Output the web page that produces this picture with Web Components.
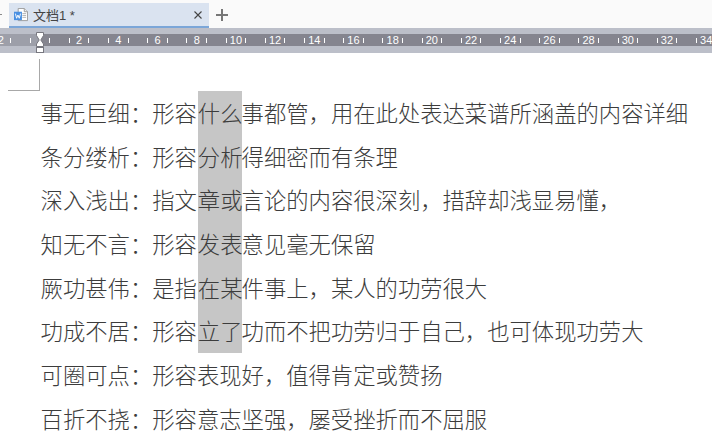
<!DOCTYPE html>
<html lang="zh-CN"><head><meta charset="utf-8"><title>文档1</title>
<style>
html,body{margin:0;padding:0;background:#fff}
body{width:712px;height:442px;overflow:hidden;font-family:"Liberation Sans","Noto Sans CJK SC",sans-serif}
</style></head><body>
<doc-app>
  <doc-tabs title-text="文档1 *"></doc-tabs>
  <doc-ruler></doc-ruler>
  <doc-page>
    <doc-line>事无巨细：形容<mark-block>什么</mark-block>事都管，用在此处表达菜谱所涵盖的内容详细</doc-line>
    <doc-line>条分缕析：形容<mark-block>分析</mark-block>得细密而有条理</doc-line>
    <doc-line>深入浅出：指文<mark-block>章或</mark-block>言论的内容很深刻，措辞却浅显易懂，</doc-line>
    <doc-line>知无不言：形容<mark-block>发表</mark-block>意见毫无保留</doc-line>
    <doc-line>厥功甚伟：是指<mark-block>在某</mark-block>件事上，某人的功劳很大</doc-line>
    <doc-line>功成不居：形容<mark-block>立了</mark-block>功而不把功劳归于自己，也可体现功劳大</doc-line>
    <doc-line>可圈可点：形容表现好，值得肯定或赞扬</doc-line>
    <doc-line>百折不挠：形容意志坚强，屡受挫折而不屈服</doc-line>
  </doc-page>
</doc-app>
<script>
function def(name, css, html, init){
  customElements.define(name, class extends HTMLElement{
    connectedCallback(){
      if(this.shadowRoot) return;
      const r=this.attachShadow({mode:'open'});
      r.innerHTML='<style>'+css+'</style>'+(typeof html==='function'?html(this):html);
      if(init) init(r,this);
    }
  });
}
def('doc-app',':host{display:flex;flex-direction:column;width:712px;height:442px;overflow:hidden}','<slot></slot>');
def('doc-tabs',`
:host{display:flex;position:relative;align-items:flex-start;height:28px;background:#fafafa;padding:3px 0 0 9px;box-sizing:border-box}
:host::before{content:"";position:absolute;left:0;top:14px;width:2px;height:1px;background:#8a8a8a}
.tab{width:200px;height:25px;box-sizing:border-box;background:#dae3f0;border-bottom:2px solid #7ba6d8;display:flex;align-items:center;padding:0 6px 0 5px;color:#444;font:13px "Liberation Sans","Noto Sans CJK SC",sans-serif}
.ic{width:14px;height:14px;margin-right:5px;flex:none}
.t{flex:1;white-space:pre}
.x{width:10px;height:10px;flex:none}
.plus{width:14px;height:14px;margin:5px 0 0 6px;flex:none}
`,h=>`<div class="tab">
<svg class="ic" viewBox="0 0 15 15"><path d="M4.5 .5H11L14.5 4V13.5H4.5Z" fill="#fff" stroke="#9a9a9a"/><path d="M11 .5V4H14.5" fill="#eee" stroke="#9a9a9a"/><path d="M9 6H13M9 8H13M9 10H13" stroke="#b0b0b0"/><rect x="0" y="4" width="8.5" height="9" fill="#4a90e2"/><path d="M1.5 6L2.8 11L4.2 7.5L5.6 11L7 6" fill="none" stroke="#fff"/></svg>
<span class="t">${h.getAttribute('title-text')}</span>
<svg class="x" viewBox="0 0 10 10"><path d="M1.5 1.5L8.5 8.5M8.5 1.5L1.5 8.5" stroke="#444" stroke-width="1.1"/></svg>
</div>
<svg class="plus" viewBox="0 0 14 14"><path d="M7 1V13M1 7H13" stroke="#777" stroke-width="2"/></svg>`);
def('doc-ruler',`
:host{display:block;position:relative;height:25px;background:#bcbfc9;overflow:hidden;box-sizing:border-box;padding-top:6px}
.bar{display:flex;height:12px;background:#85858f;margin-left:-18.8px;width:760px;position:relative}
.shade{flex:none;position:absolute;left:0;top:0;height:12px;width:58.8px;background:#9d9fa9}
.c{flex:none;width:39.2px;box-sizing:border-box;display:flex;justify-content:space-between;align-items:center;padding:0 9.3px;position:relative}
.k{width:1px;height:5px;background:#fff}
.n{color:#fff;font:11px/12px "Liberation Sans",sans-serif;width:0;display:flex;justify-content:center}
.m{position:absolute;left:35px;top:4px}
`,()=>{
  let s='<div class="bar"><div class="shade"></div>';
  for(let i=-2;i<=36;i+=2){s+=`<div class="c"><i class="k"></i><span class="n">${i===0?'':Math.abs(i)}</span><i class="k"></i></div>`;}
  s+='</div><svg class="m" width="10" height="21" viewBox="0 0 10 21"><path d="M1.5 .5H8.5V3.5L5.8 8L8.5 12V14.5H1.5V12L4.2 8L1.5 3.5Z" fill="#fff" stroke="#77777f"/><rect x="1.5" y="15.5" width="7" height="5" fill="#fff" stroke="#77777f"/></svg>';
  return s;
});
def('doc-page',`
:host{display:block;position:relative;flex:1;background:#fff;padding-top:38px}
.corner{position:absolute;left:8px;top:6px;width:32px;height:32px;box-sizing:border-box;border-right:1px solid #a8a8a8;border-bottom:1px solid #a8a8a8}
`,'<div class="corner"></div><slot></slot>');
def('doc-line',`
:host{display:block;height:43.7px;padding-left:40.6px;white-space:nowrap;color:#3c3c3c;font:300 22.33px/43.7px "Noto Sans CJK SC","Noto Sans CJK JP",sans-serif}
`,'<slot></slot>');
def('mark-block',`
:host{display:inline-block;height:44px;line-height:43.7px;background:#c6c6c6;vertical-align:top;margin-left:.9px;margin-right:-.9px}
`,'<slot></slot>');
</script>
</body></html>
